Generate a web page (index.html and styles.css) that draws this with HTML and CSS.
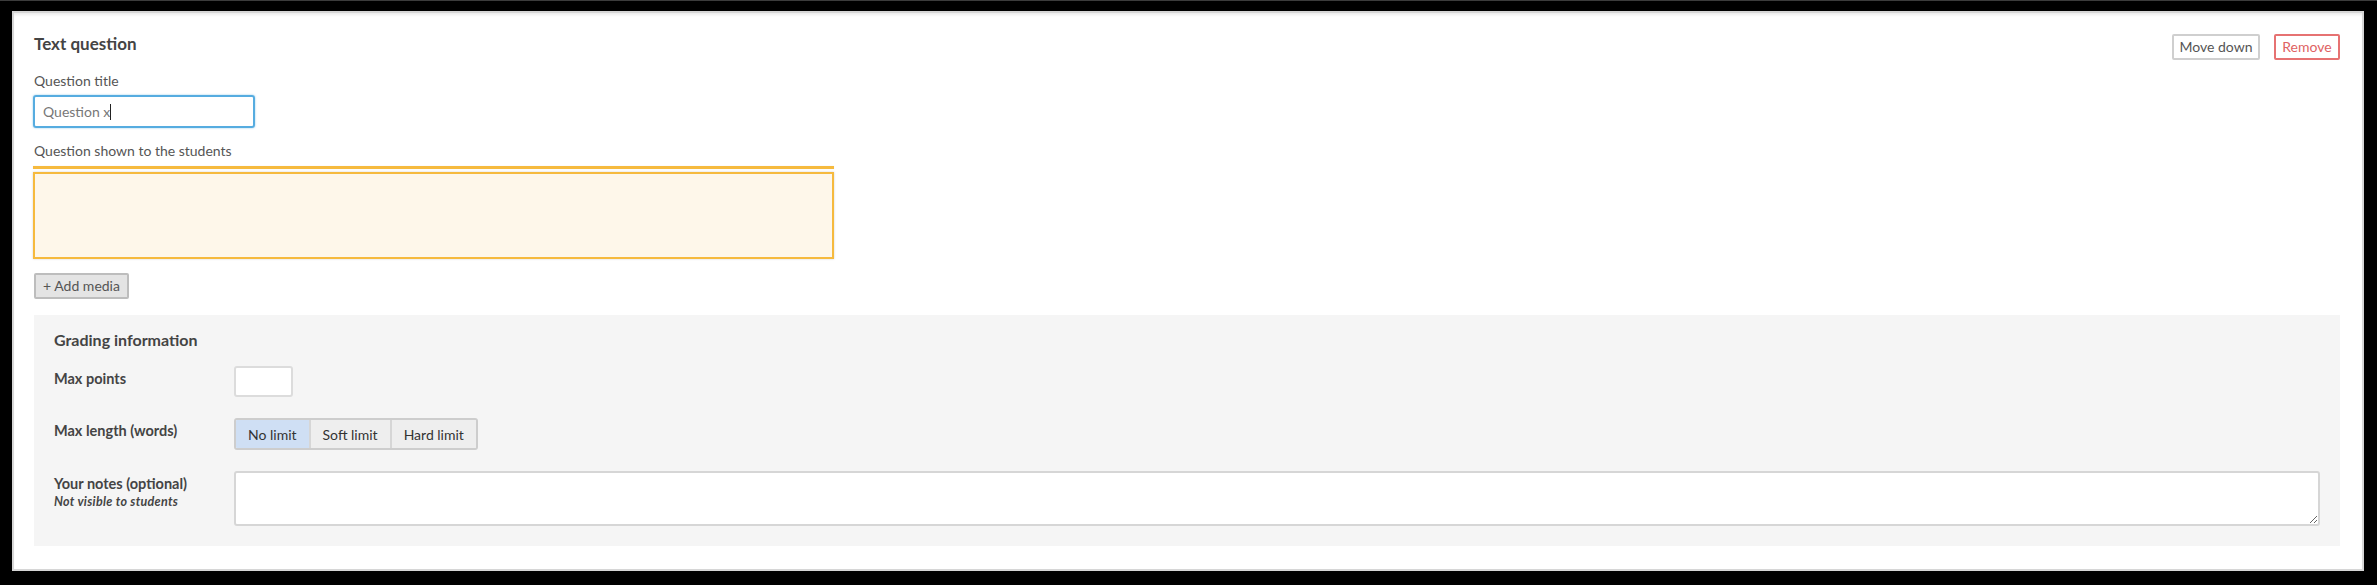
FILE: index.html
```html
<!DOCTYPE html>
<html lang="en">
<head>
<meta charset="utf-8">
<title>Text question</title>
<link rel="stylesheet" href="styles.css">
</head>
<body>
<div class="card">
  <div class="card-header">
    <h2 class="card-title">Text question</h2>
    <div class="card-actions">
      <button class="btn btn-outline" type="button">Move down</button>
      <button class="btn btn-danger" type="button">Remove</button>
    </div>
  </div>

  <label class="field-label">Question title</label>
  <div class="text-input focused">Question x<span class="caret"></span></div>

  <label class="field-label label-gap">Question shown to the students</label>
  <div class="editor">
    <div class="editor-bar"></div>
    <div class="editor-box"></div>
  </div>

  <button class="btn-media" type="button">+ Add media</button>

  <section class="grading">
    <h3 class="grading-title">Grading information</h3>
    <div class="grading-grid">
      <div class="g-label">Max points</div>
      <div class="g-control"><input class="points-input" type="text"></div>

      <div class="g-label">Max length (words)</div>
      <div class="g-control">
        <div class="seg-group">
          <span class="seg seg-active">No limit</span>
          <span class="seg">Soft limit</span>
          <span class="seg">Hard limit</span>
        </div>
      </div>

      <div class="g-label">Your notes (optional)<span class="g-sub">Not visible to students</span></div>
      <div class="g-control"><textarea class="notes"></textarea></div>
    </div>
  </section>
</div>
</body>
</html>
```

FILE: styles.css
```css
html, body {
  margin: 0;
  background: #000;
}
body {
  border-top: 1px solid #3c3c3c;
  padding: 10px 13px 13px 12px;
  font-family: Lato, "Open Sans", sans-serif;
  color: #444;
}
.card {
  background: #fff;
  border: 2px solid #d6d6d6;
  box-shadow: inset 0 3px 3px -1px #ececec;
  padding: 21px 22px 23px 20px;
}
.card-header {
  display: flex;
  justify-content: space-between;
  align-items: flex-start;
  height: 26px;
}
.card-title {
  margin: 0;
  font-size: 17px;
  line-height: 20px;
  font-weight: 700;
  color: #444;
}
.card-actions {
  display: flex;
  gap: 14px;
}
.btn {
  box-sizing: border-box;
  font-family: Lato, sans-serif;
  font-size: 14px;
  height: 26px;
  line-height: 22px;
  padding: 0;
  background: #fff;
  border-radius: 2px;
  white-space: nowrap;
  text-align: center;
  cursor: pointer;
}
.btn-outline {
  border: 2px solid #cfcfcf;
  color: #555;
  width: 88px;
}
.btn-danger {
  border: 2px solid #e67272;
  color: #e06262;
  width: 66px;
}
.field-label {
  display: block;
  font-size: 14px;
  line-height: 20px;
  color: #555;
  margin-top: 11px;
  margin-bottom: 4px;
}
.label-gap {
  margin-top: 13px;
  margin-bottom: 5px;
}
.text-input {
  box-sizing: border-box;
  width: 222px;
  height: 33px;
  margin-left: -1px;
  border: 2px solid #56ace0;
  border-radius: 3px;
  box-shadow: 0 0 2px rgba(86, 172, 224, 0.7);
  padding: 0 8px;
  font-size: 14px;
  line-height: 29px;
  color: #777;
  display: flex;
  align-items: center;
}
.caret {
  display: inline-block;
  width: 1px;
  height: 16px;
  background: #222;
  margin-left: 0;
}
.editor {
  width: 801px;
  margin-left: -1px;
}
.editor-bar {
  height: 3px;
  background: #f6ba3e;
  box-shadow: 0 0 1px rgba(0,0,0,0.15);
}
.editor-box {
  box-sizing: border-box;
  margin-top: 3px;
  height: 87px;
  background: #fef7ea;
  border: 2px solid #f6ba3e;
  box-shadow: 0 0 2px rgba(0,0,0,0.18);
}
.btn-media {
  display: block;
  margin-top: 14px;
  height: 26px;
  width: 95px;
  padding: 0;
  font-family: Lato, sans-serif;
  font-size: 14px;
  line-height: 22px;
  color: #555;
  background: #e4e4e4;
  border: 2px solid #bdbdbd;
  border-radius: 2px;
  white-space: nowrap;
}
.grading {
  margin-top: 16px;
  background: #f5f5f5;
  padding: 14px 20px 20px 20px;
}
.grading-title {
  margin: 0 0 15px 0;
  font-size: 16px;
  line-height: 22px;
  font-weight: 700;
  color: #444;
}
.grading-grid {
  display: grid;
  grid-template-columns: 180px 1fr;
  row-gap: 21px;
}
.g-label {
  padding-top: 3px;
  font-size: 14.5px;
  line-height: 20px;
  font-weight: 700;
  color: #444;
}
.g-sub {
  display: block;
  font-size: 12.5px;
  line-height: 16px;
  letter-spacing: 0.3px;
  font-style: italic;
  font-weight: 700;
  color: #444;
}
.g-control {
  display: flex;
}
.points-input {
  box-sizing: border-box;
  width: 59px;
  height: 31px;
  border: 2px solid #dcdcdc;
  border-radius: 3px;
  background: #fff;
  margin: 0;
}
.seg-group {
  display: flex;
  height: 32px;
  box-sizing: border-box;
  border: 2px solid #cdcdcd;
  border-radius: 3px;
  overflow: hidden;
}
.seg {
  display: flex;
  align-items: center;
  padding: 0 12px;
  font-size: 14px;
  color: #333;
  background: #eeeeee;
  border-left: 2px solid #d6d6d6;
}
.seg:first-child {
  border-left: 0;
}
.seg-active {
  background: #cfdff4;
}
.notes {
  box-sizing: border-box;
  width: 100%;
  height: 55px;
  margin: 0;
  border: 2px solid #d6d6d6;
  border-radius: 3px;
  background: #fff;
  resize: vertical;
  font-family: Lato, sans-serif;
}
```
